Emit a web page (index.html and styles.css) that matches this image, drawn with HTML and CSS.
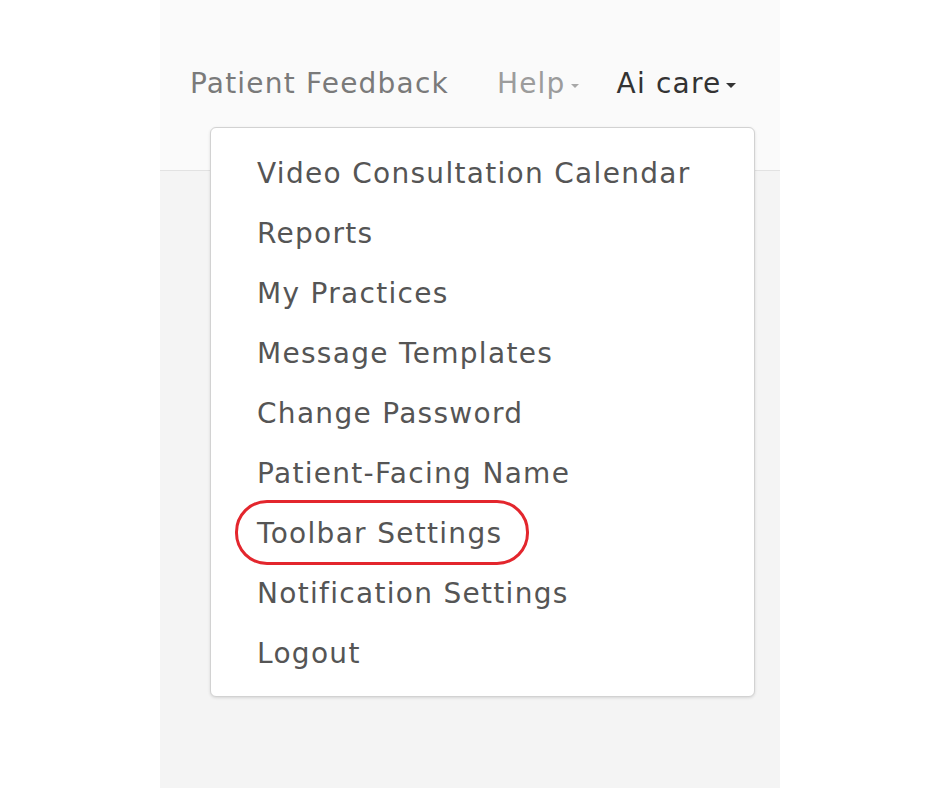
FILE: index.html
```html
<!DOCTYPE html>
<html lang="en">
<head>
    <meta charset="UTF-8">
    <meta name="viewport" content="width=device-width, initial-scale=1.0">
    <title>Ai care - Menu</title>
    <link rel="stylesheet" href="styles.css">
</head>
<body>
    <div class="panel">
        <!-- Top navigation -->
        <div class="topbar">
            <nav class="nav">
                <a class="nav-link feedback" href="#">Patient Feedback</a>
                <a class="nav-link help" href="#">Help<span class="caret"></span></a>
                <a class="nav-link user" href="#">Ai care<span class="caret"></span></a>
            </nav>

            <!-- Account dropdown -->
            <ul class="dropdown">
                <li><a href="#">Video Consultation Calendar</a></li>
                <li><a href="#">Reports</a></li>
                <li><a href="#">My Practices</a></li>
                <li><a href="#">Message Templates</a></li>
                <li><a href="#">Change Password</a></li>
                <li><a href="#">Patient-Facing Name</a></li>
                <li class="marked"><a href="#">Toolbar Settings</a></li>
                <li><a href="#">Notification Settings</a></li>
                <li><a href="#">Logout</a></li>
            </ul>
        </div>
        <div class="content"></div>
    </div>
</body>
</html>
```

FILE: styles.css
```css
body {
    margin: 0;
    background-color: #ffffff;
    font-family: "DejaVu Sans", sans-serif;
}

.panel {
    width: 620px;
    height: 788px;
    margin: 0 auto;
    background-color: #f4f4f4;
    display: flex;
    flex-direction: column;
}

.topbar {
    position: relative;
    height: 170px;
    background-color: #fafafa;
    border-bottom: 1px solid #e2e2e2;
}

.nav {
    display: flex;
    align-items: center;
    padding-top: 67px;
    padding-left: 30px;
}

.nav-link {
    font-size: 28px;
    line-height: 34px;
    letter-spacing: 1.2px;
    text-decoration: none;
    display: flex;
    align-items: center;
}

.feedback {
    color: #7a7a7a;
}

.help {
    color: #9c9c9c;
    margin-left: 48px;
}

.user {
    color: #333333;
    margin-left: 38px;
}

.caret {
    display: inline-block;
    width: 0;
    height: 0;
    margin-left: 4px;
    margin-top: 3px;
    border-left: 5px solid transparent;
    border-right: 5px solid transparent;
    border-top: 5px solid currentColor;
}

.help .caret {
    margin-left: 5px;
    border-left-width: 4px;
    border-right-width: 4px;
    border-top: 4px solid #a8a8a8;
}

.dropdown {
    position: absolute;
    top: 127px;
    left: 50px;
    width: 545px;
    margin: 0;
    padding: 15px 0 13px;
    list-style: none;
    background-color: #ffffff;
    border: 1px solid #d2d2d2;
    border-radius: 6px;
    box-shadow: 0 1px 3px rgba(0, 0, 0, 0.12);
    box-sizing: border-box;
    z-index: 2;
}

.dropdown li {
    position: relative;
    height: 60px;
    display: flex;
    align-items: center;
    padding-left: 46px;
}

.dropdown a {
    color: #555555;
    font-size: 28px;
    letter-spacing: 1.3px;
    text-decoration: none;
}

/* red annotation ring */
.marked::after {
    content: "";
    position: absolute;
    left: 24px;
    top: -3px;
    width: 288px;
    height: 59px;
    border: 3px solid #e3262d;
    border-radius: 32px;
}

.content {
    flex: 1;
}
```
